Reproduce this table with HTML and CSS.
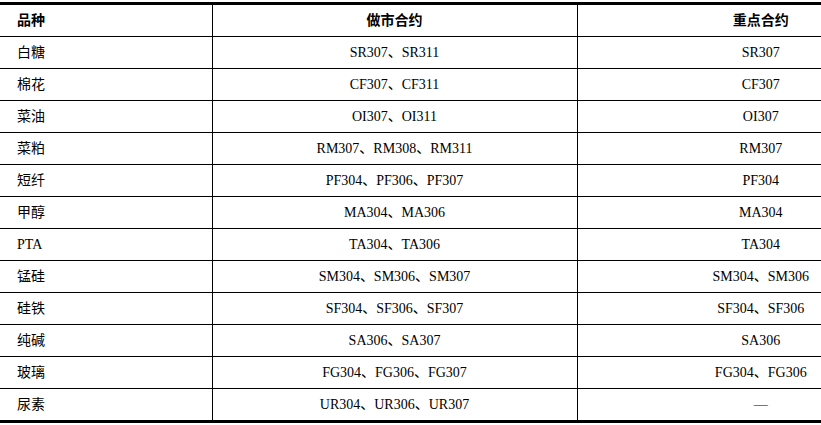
FILE: index.html
```html
<!DOCTYPE html>
<html lang="zh">
<head>
<meta charset="utf-8">
<link rel="stylesheet" href="styles.css">
</head>
<body>
<table class="grid">
  <colgroup>
    <col class="c1"><col class="c2"><col class="c3">
  </colgroup>
  <thead>
    <tr><th class="name">品种</th><th>做市合约</th><th>重点合约</th></tr>
  </thead>
  <tbody>
    <tr><td class="name">白糖</td><td>SR307、SR311</td><td>SR307</td></tr>
    <tr><td class="name">棉花</td><td>CF307、CF311</td><td>CF307</td></tr>
    <tr><td class="name">菜油</td><td>OI307、OI311</td><td>OI307</td></tr>
    <tr><td class="name">菜粕</td><td>RM307、RM308、RM311</td><td>RM307</td></tr>
    <tr><td class="name">短纤</td><td>PF304、PF306、PF307</td><td>PF304</td></tr>
    <tr><td class="name">甲醇</td><td>MA304、MA306</td><td>MA304</td></tr>
    <tr><td class="name">PTA</td><td>TA304、TA306</td><td>TA304</td></tr>
    <tr><td class="name">锰硅</td><td>SM304、SM306、SM307</td><td>SM304、SM306</td></tr>
    <tr><td class="name">硅铁</td><td>SF304、SF306、SF307</td><td>SF304、SF306</td></tr>
    <tr><td class="name">纯碱</td><td>SA306、SA307</td><td>SA306</td></tr>
    <tr><td class="name">玻璃</td><td>FG304、FG306、FG307</td><td>FG304、FG306</td></tr>
    <tr><td class="name">尿素</td><td>UR304、UR306、UR307</td><td>—</td></tr>
  </tbody>
</table>
</body>
</html>
```
FILE: styles.css
```css
html, body {
  margin: 0;
  padding: 0;
  background: #fff;
  overflow: hidden;
}
body {
  padding-top: 2px;
  font-family: "Liberation Serif", "Noto Sans CJK SC", serif;
  font-size: 14px;
  color: #000;
}
.grid {
  border-collapse: collapse;
  width: 944px;
  table-layout: fixed;
  border-top: 3px solid #000;
  border-bottom: 3px solid #000;
}
.c1 { width: 212px; }
.c2 { width: 365px; }
.c3 { width: 367px; }
.grid th, .grid td {
  height: 31px;
  padding: 0;
  text-align: center;
  vertical-align: middle;
  border-bottom: 1px solid #000;
  border-left: 1px solid #000;
  line-height: 16px;
  white-space: nowrap;
}
.grid th {
  font-weight: bold;
}
.grid .name {
  text-align: left;
  padding-left: 17px;
  border-left: none;
}
.grid tbody tr:last-child td {
  border-bottom: none;
}
```
